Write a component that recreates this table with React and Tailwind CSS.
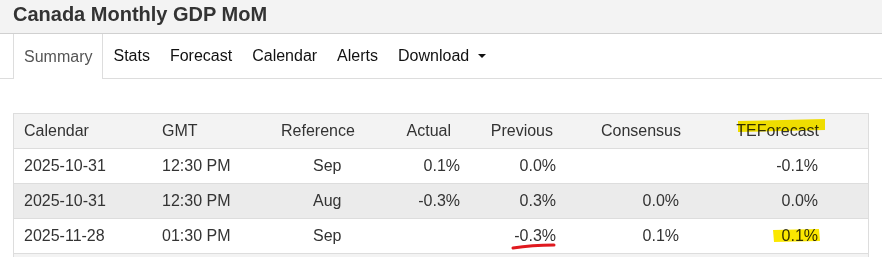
import React from "react";

const rows = [
  ["2025-10-31", "12:30 PM", "Sep", "0.1%", "0.0%", "", "-0.1%", "bg-white"],
  ["2025-10-31", "12:30 PM", "Aug", "-0.3%", "0.3%", "0.0%", "0.0%", "bg-[#ebebeb]"],
  ["2025-11-28", "01:30 PM", "Sep", "", "-0.3%", "0.1%", "0.1%", "bg-white"],
];

const gridCols =
  "grid grid-cols-[138px_118px_100px_100px_96px_124px_140px_1fr] items-center h-[35px] border-b border-[#dddddd]";

export default function App() {
  return (
    <div className="relative w-[882px] h-[257px] overflow-hidden bg-white font-['Liberation_Sans',Arial,sans-serif]">
      <div className="h-[34px] bg-[#f3f3f3] border-b border-[#d0d0d0] pl-[13px] pt-[4px] text-[20px] leading-[20px] font-bold text-[#333333]">
        Canada Monthly GDP MoM
      </div>

      <div className="flex h-[45px] border-b border-[#dddddd] pl-[13px] text-[16px] text-[#111111]">
        <div className="flex items-center h-[45px] -mb-px bg-white border-l border-r border-[#dddddd] px-[10px] text-[#555555]">
          Summary
        </div>
        <div className="flex items-center px-[10px]">Stats</div>
        <div className="flex items-center px-[10px]">Forecast</div>
        <div className="flex items-center px-[10px]">Calendar</div>
        <div className="flex items-center px-[10px]">Alerts</div>
        <div className="flex items-center px-[10px]">
          Download
          <span className="ml-[9px] w-0 h-0 border-t-[4px] border-x-[4px] border-x-transparent border-t-[#111111]" />
        </div>
      </div>

      <div className="mt-[34px] ml-[13px] w-[856px] border-t border-l border-r border-[#dddddd] text-[16px] text-[#333333]">
        <div className={`${gridCols} bg-[#f3f3f3]`}>
          <div className="pl-[10px]">Calendar</div>
          <div className="pl-[10px]">GMT</div>
          <div className="pl-[11px]">Reference</div>
          <div className="text-right pr-[19px]">Actual</div>
          <div className="text-right pr-[13px]">Previous</div>
          <div className="text-right pr-[9px]">Consensus</div>
          <div className="text-right pr-[11px]">TEForecast</div>
          <div />
        </div>
        {rows.map((r, i) => (
          <div key={i} className={`${gridCols} ${r[7]}`}>
            <div className="pl-[10px]">{r[0]}</div>
            <div className="pl-[10px]">{r[1]}</div>
            <div className="pl-[43px]">{r[2]}</div>
            <div className="text-right pr-[10px]">{r[3]}</div>
            <div className="text-right pr-[10px]">{r[4]}</div>
            <div className="text-right pr-[11px]">{r[5]}</div>
            <div className="text-right pr-[12px]">{r[6]}</div>
            <div />
          </div>
        ))}
        <div className="h-[35px] bg-[#f3f3f3]" />
      </div>

      {/* annotations */}
      <svg
        className="absolute left-[736px] top-[117px] mix-blend-multiply"
        width="92"
        height="18"
        viewBox="0 0 92 18"
      >
        <polygon points="2,4 89,2 89,13 2,15" fill="#fbe800" />
      </svg>
      <svg
        className="absolute left-[771px] top-[227px] mix-blend-multiply"
        width="52"
        height="17"
        viewBox="0 0 52 17"
      >
        <polygon points="2,3 48,2 49,14 3,15" fill="#fbe800" />
      </svg>
      <svg
        className="absolute left-[510px] top-[241px]"
        width="48"
        height="12"
        viewBox="0 0 48 12"
      >
        <path d="M3,7 Q22,4 44,4" stroke="#e0191f" strokeWidth="3" fill="none" strokeLinecap="round" />
      </svg>
    </div>
  );
}
